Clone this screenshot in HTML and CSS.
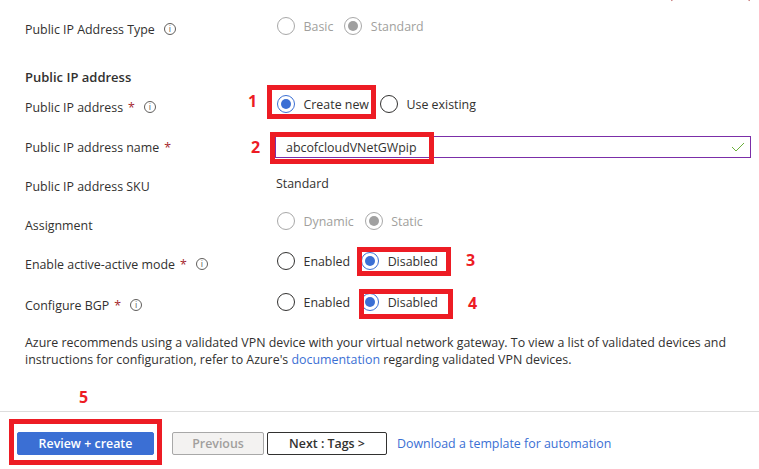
FILE: index.html
```html
<!DOCTYPE html>
<html lang="en">
<head>
    <meta charset="UTF-8">
    <meta name="viewport" content="width=device-width, initial-scale=1.0">
    <title>Create virtual network gateway</title>
    <link rel="stylesheet" href="styles.css">
</head>
<body>

<div class="page">
    <div class="clipped-mark"></div>

    <form class="form">
        <div class="row row-type">
            <div class="label">Public IP Address Type <span class="info">i</span></div>
            <div class="options disabled">
                <span class="option"><span class="radio"></span>Basic</span>
                <span class="option"><span class="radio on"></span>Standard</span>
            </div>
        </div>

        <h2 class="section">Public IP address</h2>

        <div class="row row-address">
            <div class="label">Public IP address <span class="req">*</span> <span class="info">i</span></div>
            <div class="options">
                <span class="option"><span class="radio on"></span>Create new</span>
                <span class="option"><span class="radio"></span>Use existing</span>
            </div>
        </div>

        <div class="row row-name">
            <div class="label">Public IP address name <span class="req">*</span></div>
            <div class="text-input">
                <span>abcofcloudVNetGWpip</span>
                <svg class="check" width="14" height="10" viewBox="0 0 14 10"><path d="M1 5l4 4 8-8" fill="none" stroke="#6bb03a" stroke-width="1"/></svg>
            </div>
        </div>

        <div class="row row-sku">
            <div class="label">Public IP address SKU</div>
            <div class="value">Standard</div>
        </div>

        <div class="row row-assign">
            <div class="label">Assignment</div>
            <div class="options disabled">
                <span class="option"><span class="radio"></span>Dynamic</span>
                <span class="option"><span class="radio on"></span>Static</span>
            </div>
        </div>

        <div class="row row-mode">
            <div class="label">Enable active-active mode <span class="req">*</span> <span class="info">i</span></div>
            <div class="options">
                <span class="option"><span class="radio"></span>Enabled</span>
                <span class="option"><span class="radio on"></span>Disabled</span>
            </div>
        </div>

        <div class="row row-bgp">
            <div class="label">Configure BGP <span class="req">*</span> <span class="info">i</span></div>
            <div class="options">
                <span class="option"><span class="radio"></span>Enabled</span>
                <span class="option"><span class="radio on"></span>Disabled</span>
            </div>
        </div>

        <p class="note">Azure recommends using a validated VPN device with your virtual network gateway. To view a list of validated devices and instructions for configuration, refer to Azure's <a href="#">documentation</a> regarding validated VPN devices.</p>
    </form>

    <div class="footer">
        <button type="button" class="btn primary">Review + create</button>
        <button type="button" class="btn prev">Previous</button>
        <button type="button" class="btn next">Next : Tags &gt;</button>
        <a class="template" href="#">Download a template for automation</a>
    </div>

    <!-- red callouts drawn over the screenshot -->
    <div class="box box1"></div>
    <div class="box box2"></div>
    <div class="box box3"></div>
    <div class="box box4"></div>
    <div class="box box5"></div>
    <span class="num num1">1</span>
    <span class="num num2">2</span>
    <span class="num num3">3</span>
    <span class="num num4">4</span>
    <span class="num num5">5</span>
</div>

</body>
</html>
```

FILE: styles.css
```css
html, body { margin: 0; padding: 0; }
body { font-family: "Open Sans", "Noto Sans", Arial, sans-serif; font-size: 12.4px; color: #323130; background: #fff; }
.page { position: relative; width: 759px; height: 469px; overflow: hidden; }

.form { padding: 19px 8px 0 25px; }
.row { display: flex; align-items: center; }
.label { width: 250px; flex-shrink: 0; display: flex; align-items: center; gap: 5px; height: 20px; white-space: nowrap; }
.req { color: #a4262c; }
.info { width: 10px; height: 10px; margin-left: 4px; border: 1px solid #605e5c; border-radius: 50%; font-size: 9px; line-height: 10px; text-align: center; color: #605e5c; }

.options { display: flex; gap: 11px; position: relative; top: -3px; margin-left: 2px; }
.option { display: flex; align-items: center; gap: 8.5px; }
.radio { width: 18px; height: 18px; box-sizing: border-box; border: 1px solid #323130; border-radius: 50%; display: flex; align-items: center; justify-content: center; }
.radio.on { border-color: #3b6fd4; }
.radio.on::after { content: ""; width: 10px; height: 10px; border-radius: 50%; background: #3b6fd4; }
.disabled { color: #a19f9d; }
.disabled .radio { border-color: #a8a8a8; }
.disabled .radio.on::after { background: #a0a0a0; }

.section { margin: 0; font-size: 13px; font-weight: 600; line-height: 20px; color: #323130; }
.row-type { margin-bottom: 28px; }
.row-address { margin-top: 10px; }
.row-name { margin-top: 19px; }
.row-sku { margin-top: 18px; }
.row-assign { margin-top: 19px; }
.row-assign .options { top: -4px; }
.row-mode { margin-top: 19px; }
.row-bgp { margin-top: 21px; }

.text-input { flex: 1; height: 22px; box-sizing: border-box; border: 1px solid #7b2ea8; display: flex; align-items: center; justify-content: space-between; padding: 0 5px 0 10px; }
.check { display: block; }
.value { position: relative; top: -3px; margin-left: 1px; }

.note { margin: 19px 20px 0 0; line-height: 17px; }
a { color: #3b6fd4; text-decoration: none; }

.footer { position: absolute; left: 0; right: 0; top: 411px; height: 58px; border-top: 1px solid #ddd; display: flex; align-items: center; padding: 6px 0 0 17px; box-sizing: border-box; }
.btn { height: 23px; padding: 0; box-sizing: border-box; font-family: inherit; font-size: 12.4px; border-radius: 2px; font-weight: 600; }
.primary { width: 137px; background: #3b6fd4; border: 1px solid #3b6fd4; color: #fff; }
.prev { width: 92px; margin-left: 18px; background: #f3f2f1; border: 1px solid #a8a8a8; color: #a19f9d; }
.next { width: 120px; margin-left: 3px; background: #fff; border: 1px solid #323130; color: #323130; }
.template { margin-left: 10px; }

.box { position: absolute; box-sizing: border-box; border: 5px solid #ed1c24; }
.box1 { left: 267px; top: 85px; width: 109px; height: 34px; }
.box2 { left: 270px; top: 132px; width: 164px; height: 32px; }
.box3 { left: 357px; top: 247px; width: 94px; height: 29px; }
.box4 { left: 359px; top: 289px; width: 94px; height: 30px; }
.box5 { left: 9px; top: 419px; width: 153px; height: 46px; }
.num { position: absolute; color: #ed1c24; font-weight: 700; font-size: 16px; line-height: 20px; }
.num1 { left: 248px; top: 91px; }
.num2 { left: 251px; top: 137px; }
.num3 { left: 466px; top: 250px; }
.num4 { left: 468px; top: 293px; }
.num5 { left: 79px; top: 387px; }
.clipped-mark { position: absolute; left: 671px; top: -6px; width: 79px; height: 8px; box-sizing: border-box; border: 1px solid transparent; border-left-color: #a33; border-right-color: #a33; border-radius: 3px; }
```
